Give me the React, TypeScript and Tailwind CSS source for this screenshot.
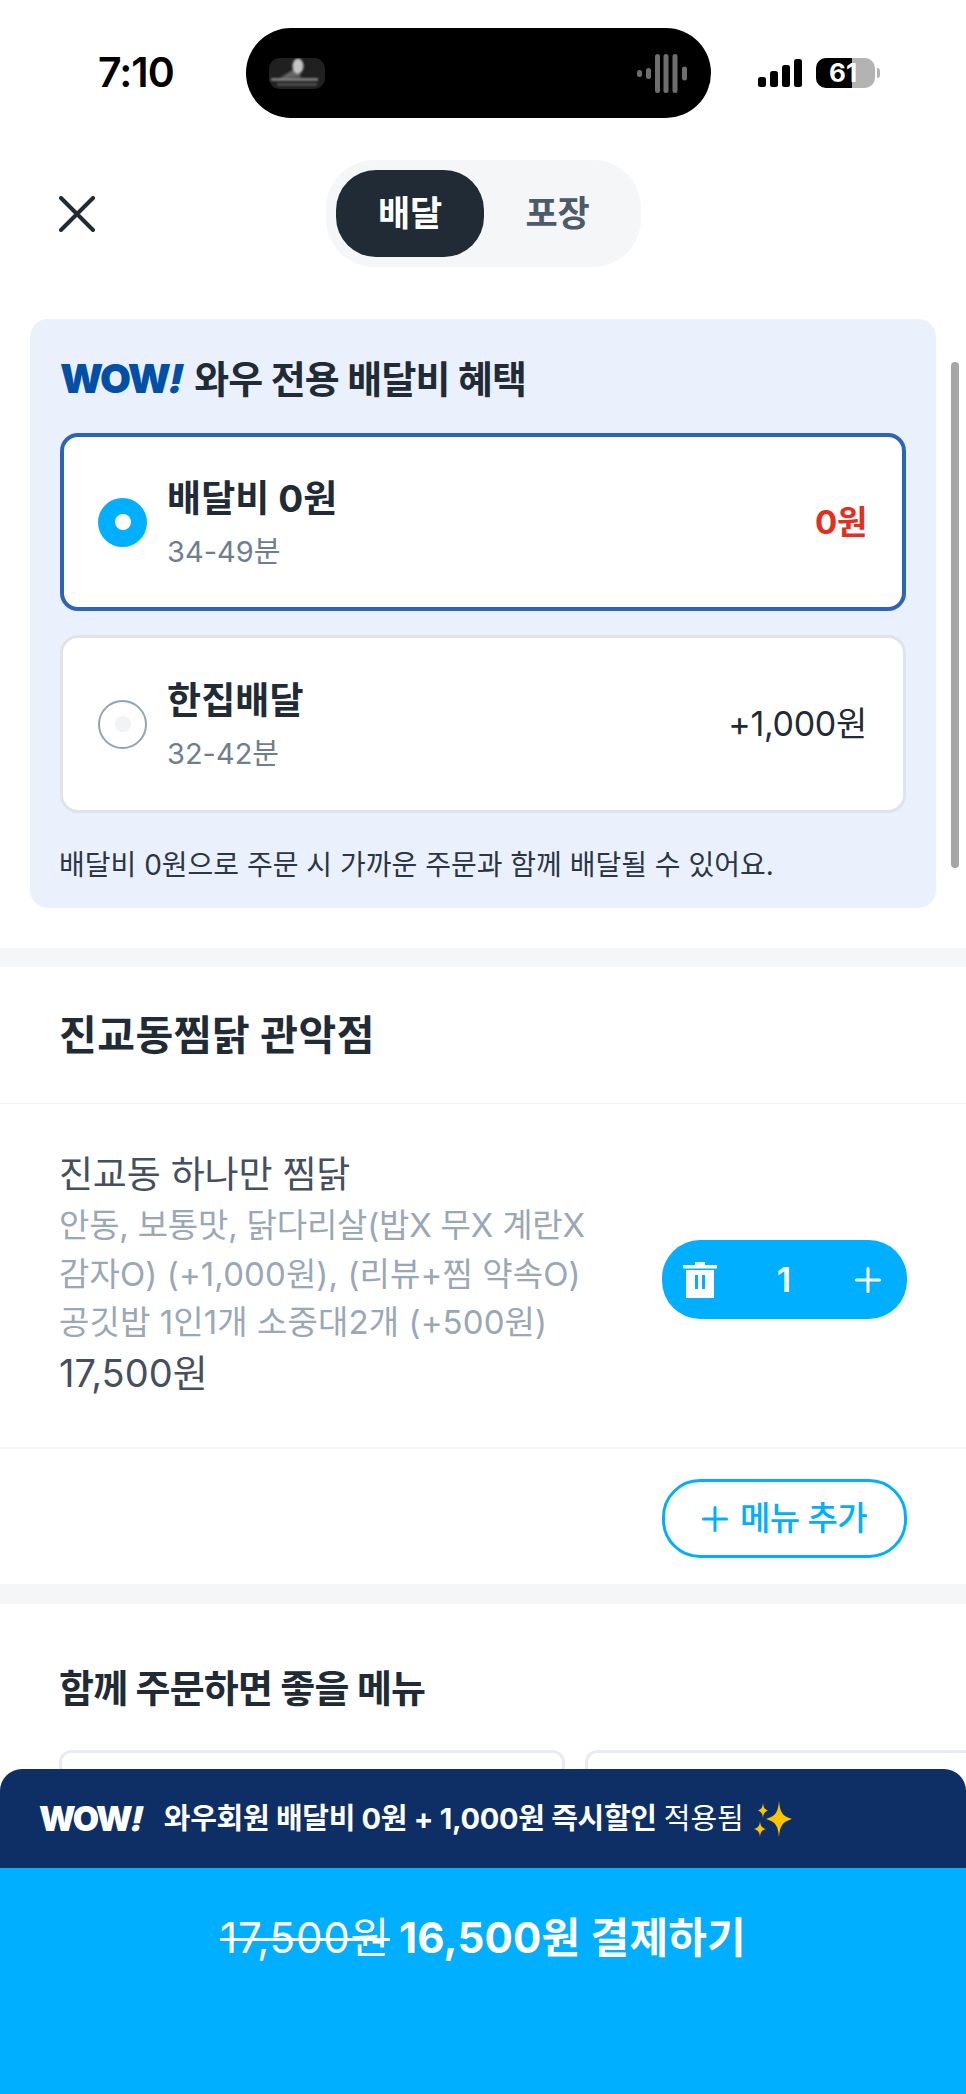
import React from "react";

const sans = "font-['Inter','Noto_Sans_CJK_KR',sans-serif]";

function WowLogo({ light }: { light?: boolean }) {
  return (
    <span
      className={`inline-block font-['Inter',sans-serif] font-black leading-none ${
        light ? "text-white text-[34px] tracking-[-1.5px]" : "text-[#0250a5] text-[40px] tracking-[-1.5px]"
      }`}
    >
      WOW<span className="inline-block -skew-x-12">!</span>
    </span>
  );
}

function Plus({ size, color, w }: { size: number; color: string; w: number }) {
  return (
    <svg width={size} height={size} viewBox="0 0 26 26" fill="none" stroke={color} strokeWidth={w} strokeLinecap="round">
      <path d="M1.5 13H24.5M13 1.5V24.5" />
    </svg>
  );
}

function Radio({ on }: { on?: boolean }) {
  return on ? (
    <div className="flex h-[49px] w-[49px] shrink-0 items-center justify-center rounded-full bg-[#00afff]">
      <div className="h-[16px] w-[16px] rounded-full bg-white" />
    </div>
  ) : (
    <div className="flex h-[49px] w-[49px] shrink-0 items-center justify-center rounded-full border-[2px] border-[#95a3b2] bg-white">
      <div className="h-[16px] w-[16px] rounded-full bg-[#f1f3f5]" />
    </div>
  );
}

function Option({ on, title, sub, price }: { on?: boolean; title: string; sub: string; price: string }) {
  return (
    <div
      className={`flex h-[178px] items-center rounded-[18px] bg-white ${
        on ? "border-[4px] border-[#2c63bb] pl-[34px] pr-[35px]" : "border-[3px] border-[#e0e4e9] pl-[35px] pr-[36px]"
      }`}
    >
      <Radio on={on} />
      <div className="ml-[20px] flex flex-col pt-[1px]">
        <div className="text-[37px] font-bold leading-[44px] tracking-[0.1px] text-[#212b36]">{title}</div>
        <div className="mt-[14px] text-[29px] leading-[34px] tracking-[0px] text-[#6f7e8e]">{sub}</div>
      </div>
      <div
        className={`ml-auto leading-[40px] ${
          on ? "text-[33px] font-bold tracking-[-0.3px] text-[#e52d20]" : "text-[34px] tracking-[-0.3px] text-[#212b36]"
        }`}
      >
        {price}
      </div>
    </div>
  );
}

function Thumb() {
  return (
    <svg width="56" height="31" viewBox="0 0 56 31">
      <defs>
        <filter id="b">
          <feGaussianBlur stdDeviation="0.8" />
        </filter>
      </defs>
      <rect width="56" height="31" rx="11" fill="#202020" />
      <g filter="url(#b)">
        <path d="M11 20 L22 13 L28 9 L32 19 Z" fill="#666" />
        <ellipse cx="29" cy="8" rx="5.5" ry="7.5" fill="#c4c4c4" />
        <rect x="2" y="20.5" width="47" height="2" fill="#a8a8a8" />
        <rect x="8" y="25.5" width="40" height="2" fill="#606060" />
      </g>
    </svg>
  );
}

function Wave() {
  const bars = [
    [0, 7],
    [9, 11],
    [18, 39],
    [26.5, 39],
    [35.5, 39],
    [45, 14],
  ];
  return (
    <svg width="50" height="39" viewBox="0 0 50 39" fill="#6e6e6e">
      {bars.map(([x, h]) => (
        <rect key={x} x={x} y={(39 - h) / 2} width={5} height={h} rx={2.5} />
      ))}
    </svg>
  );
}

function StatusBar() {
  return (
    <div className="flex h-[118px] items-start pt-[28px]">
      <div className="ml-[98px] flex h-[90px] w-[148px] items-center pb-[1px]">
        <span className="text-[41px] font-semibold leading-none tracking-[-1px] text-black">7:10</span>
      </div>
      <div className="flex h-[90px] w-[465px] items-center justify-between rounded-full bg-black pl-[23px] pr-[24px]">
        <Thumb />
        <Wave />
      </div>
      <div className="ml-[47px] flex h-[90px] items-center">
        <svg width="44" height="28" viewBox="0 0 44 28" fill="#000">
          <rect x="0" y="18" width="8" height="10" rx="2.5" />
          <rect x="12" y="12" width="8" height="16" rx="2.5" />
          <rect x="24" y="6" width="8" height="22" rx="2.5" />
          <rect x="36" y="0" width="8" height="28" rx="2.5" />
        </svg>
        <div className="relative ml-[14px] h-[30px] w-[59px]">
          <div className="flex h-full w-full overflow-hidden rounded-[10px] bg-[#b3b3b3]">
            <div className="h-full w-[36px] bg-black" />
          </div>
          <span className="absolute left-[13px] top-0 text-[26px] font-bold leading-[30px] text-white">61</span>
        </div>
        <div className="ml-[2px] h-[10px] w-[3px] rounded-r-full bg-[#b3b3b3]" />
      </div>
    </div>
  );
}

export default function App() {
  return (
    <div className={`relative h-[2094px] w-[966px] overflow-hidden bg-white ${sans}`}>
      <StatusBar />

      {/* header */}
      <div className="mt-[42px] grid h-[107px] grid-cols-[326px_315px_1fr]">
        <div className="flex items-center pl-[59px]">
          <svg width="36" height="36" viewBox="0 0 36 36" fill="none" stroke="#212b36" strokeWidth="4" strokeLinecap="round">
            <path d="M2 2L34 34M34 2L2 34" />
          </svg>
        </div>
        <div className="flex items-center rounded-[48px] bg-[#f5f6f8] px-[10px]">
          <div className="flex h-[87px] w-[148px] items-center justify-center rounded-[40px] bg-[#212b36] text-[35px] font-bold tracking-[-0.3px] text-white">
            배달
          </div>
          <div className="flex h-[87px] w-[147px] items-center justify-center text-[35px] font-bold tracking-[-0.3px] text-[#4c5a6b]">
            포장
          </div>
        </div>
      </div>

      {/* wow card */}
      <div className="mx-[30px] mt-[52px] h-[589px] rounded-[18px] bg-[#eaf1fc] px-[30px] pt-[38px]">
        <div className="flex h-[44px] items-center">
          <WowLogo />
          <span className="ml-[11px] text-[38px] font-bold leading-[44px] tracking-[-0.8px] text-[#212b36]">
            와우 전용 배달비 혜택
          </span>
        </div>
        <div className="mt-[32px] flex flex-col gap-[24px]">
          <Option on title="배달비 0원" sub="34-49분" price="0원" />
          <Option title="한집배달" sub="32-42분" price="+1,000원" />
        </div>
        <div className="mt-[32px] -ml-[1px] text-[28px] leading-[40px] tracking-[0px] text-[#2b3644]">
          배달비 0원으로 주문 시 가까운 주문과 함께 배달될 수 있어요.
        </div>
      </div>

      {/* band */}
      <div className="mt-[40px] h-[19px] bg-[#f5f6f8]" />

      {/* restaurant */}
      <div className="flex h-[137px] items-center border-b-[1px] border-[#f1f2f4] pl-[59px]">
        <span className="text-[41px] font-bold leading-[48px] tracking-[0.5px] text-[#212b36]">진교동찜닭 관악점</span>
      </div>

      {/* menu item */}
      <div className="flex h-[345px] items-start border-b-[2px] border-[#f4f5f6] pl-[59px] pr-[59px]">
        <div className="flex w-[580px] flex-col pt-[47px]">
          <div className="text-[37px] leading-[48px] tracking-[-0.2px] text-[#444f5f]">진교동 하나만 찜닭</div>
          <div className="mt-[2px] text-[33px] leading-[48.5px] text-[#9aa7b5]">
            <div className="tracking-[-0.2px]">안동, 보통맛, 닭다리살(밥X 무X 계란X</div>
            <div className="tracking-[0.1px]">감자O) (+1,000원), (리뷰+찜 약속O)</div>
            <div className="tracking-[0.1px]">공깃밥 1인1개 소중대2개 (+500원)</div>
          </div>
          <div className="mt-[2px] text-[38px] leading-[48px] tracking-[0px] text-[#444f5f]">17,500원</div>
        </div>
        <div className="mt-[136px] ml-auto flex h-[79px] w-[245px] items-center justify-between rounded-[38px] bg-[#00afff] pl-[21px] pr-[26px]">
          <svg width="34" height="36" viewBox="0 0 34 36" fill="#fff">
            <path d="M12 0H22V3H34V6.5H0V3H12Z" />
            <path fillRule="evenodd" d="M3 8H31V36H3ZM12 13V27H15V13ZM19 13V27H22V13Z" />
          </svg>
          <span className="mr-[4px] text-[34px] font-semibold leading-none text-white">1</span>
          <Plus size={26} color="#fff" w={3} />
        </div>
      </div>

      {/* add */}
      <div className="flex h-[135px] items-start justify-end pr-[59px] pt-[30px]">
        <div className="flex h-[79px] w-[245px] items-center justify-center gap-[12px] rounded-[38px] border-[3px] border-[#00afff]">
          <Plus size={26} color="#00afff" w={3} />
          <span className="text-[33px] font-medium leading-none tracking-[-0.6px] text-[#00afff]">메뉴 추가</span>
        </div>
      </div>

      <div className="h-[20px] bg-[#f5f6f8]" />

      {/* recommended */}
      <div className="pl-[59px] pt-[60px]">
        <div className="text-[38px] font-bold leading-[48px] tracking-[-0.8px] text-[#212b36]">함께 주문하면 좋을 메뉴</div>
        <div className="mt-[38px] flex gap-[20px]">
          <div className="h-[300px] w-[506px] shrink-0 rounded-[12px] border-[3px] border-[#e8ebef]" />
          <div className="h-[300px] w-[505px] shrink-0 rounded-[12px] border-[3px] border-[#e8ebef]" />
        </div>
      </div>

      {/* scrollbar */}
      <div className="absolute left-[951px] top-[362px] h-[506px] w-[8px] rounded-full bg-[#a6a6a6]" />

      {/* footer */}
      <div className="absolute bottom-0 left-0 right-0">
        <div className="flex h-[99px] items-center rounded-t-[22px] bg-[#0e2f66] pl-[39px] text-white">
          <WowLogo light />
          <span className="ml-[21px] text-[29px] font-bold leading-[36px] tracking-[-0.3px]">
            와우회원 배달비 0원 + 1,000원 즉시할인
          </span>
          <span className="ml-[7px] text-[29px] leading-[36px] tracking-[0px]">적용됨</span>
          <svg className="ml-[10px]" width="38" height="36" viewBox="0 0 38 36" fill="#ffc400">
            <path d="M25 0C26 11 28 15 38 18C28 21 26 25 25 36C24 25 22 21 12 18C22 15 24 11 25 0Z" />
            <path d="M9 2C9.5 6.5 10.5 8 14 9.5C10.5 11 9.5 12.5 9 17C8.5 12.5 7.5 11 4 9.5C7.5 8 8.5 6.5 9 2Z" />
            <path d="M6 20C6.5 25 7.5 26.5 12 28C7.5 29.5 6.5 31 6 36C5.5 31 4.5 29.5 0 28C4.5 26.5 5.5 25 6 20Z" />
          </svg>
        </div>
        <div className="flex h-[226px] items-start justify-center bg-[#00afff] pt-[44px]">
          <div className="flex items-center text-white">
            <span className="text-[42px] leading-[52px] tracking-[0.8px] line-through decoration-[3px]">17,500원</span>
            <span className="ml-[9px] text-[42px] font-bold leading-[52px] tracking-[0.2px]">16,500원 결제하기</span>
          </div>
        </div>
      </div>
    </div>
  );
}
